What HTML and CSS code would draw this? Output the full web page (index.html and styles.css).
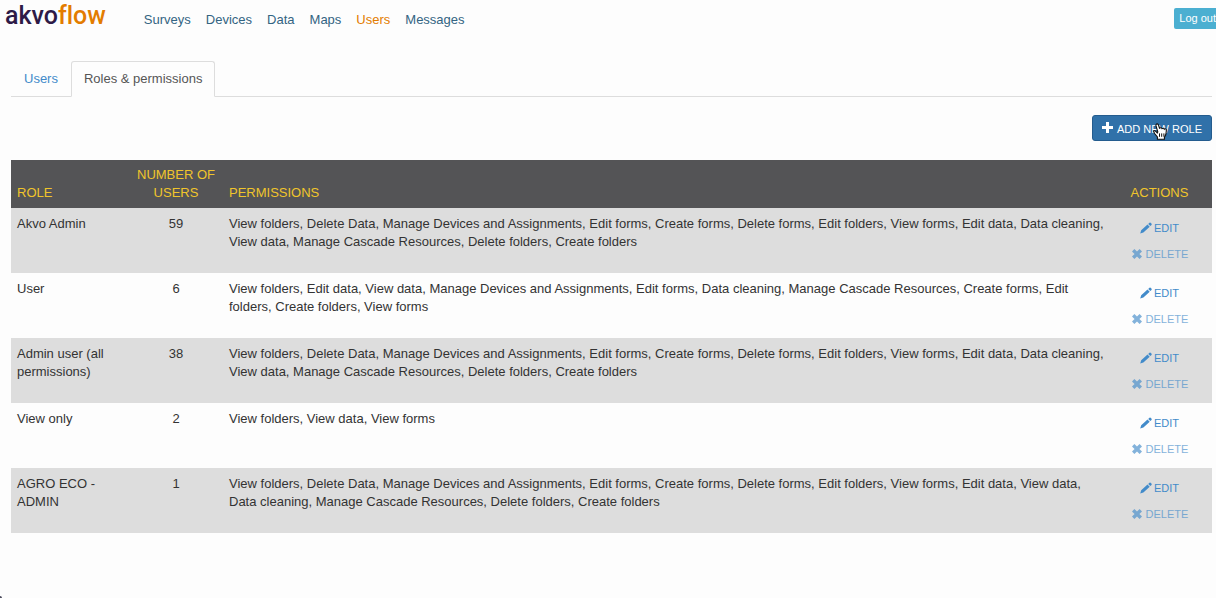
FILE: index.html
```html
<!DOCTYPE html>
<html lang="en">
<head>
<meta charset="utf-8">
<title>Akvo Flow - Roles &amp; permissions</title>
<link rel="stylesheet" href="styles.css">
</head>
<body>
<svg class="sprite" aria-hidden="true">
  <symbol id="pencil" viewBox="0 0 12 12"><path d="M0.2 11.6L1.2 8.3L7.5 2.5L9.7 4.8L3.4 10.6ZM8.2 1.9L9.5 .7Q10.1 .3 10.6 .8L11.6 1.8Q12 2.4 11.5 3L10.3 4.1Z" fill="currentColor"/></symbol>
  <symbol id="cross" viewBox="0 0 12 12"><path d="M1 3.4L3.4 1L6 3.6L8.6 1L11 3.4L8.4 6L11 8.6L8.6 11L6 8.4L3.4 11L1 8.6L3.6 6Z" fill="currentColor"/></symbol>
</svg>
<header class="header">
  <a class="logo" href="#">akvo<span class="logo-flow">flow</span></a>
  <nav class="nav">
    <a href="#">Surveys</a>
    <a href="#">Devices</a>
    <a href="#">Data</a>
    <a href="#">Maps</a>
    <a class="current" href="#">Users</a>
    <a href="#">Messages</a>
  </nav>
  <a class="logout" href="#">Log out</a>
</header>
<main class="main">
  <nav class="tabs">
    <a class="tab" href="#">Users</a>
    <a class="tab active" href="#">Roles &amp; permissions</a>
  </nav>
  <div class="toolbar">
    <button class="add" type="button"><svg class="plus" viewBox="0 0 11 11" aria-hidden="true"><path d="M4 0H7V4H11V7H7V11H4V7H0V4H4Z" fill="currentColor"/></svg>ADD NEW ROLE</button>
    <svg class="pointer" viewBox="0 0 14 17" aria-hidden="true"><path d="M4.2 10L2.6 8.2Q.8 6.8 .6 8.2Q.8 9.4 2 11L4.4 14V16.3H11.4V14.4Q13.3 12 13.3 8V6.5Q12.3 5.2 11.3 6.2Q10.5 4.6 9 5.6Q8.2 4.2 6.5 5.2L5.3 1.6Q4.2 .2 3.2 1.4Q2.6 2 3 2.8L4.8 9Z" fill="#fff" stroke="#111" stroke-width="1.1"/><path d="M6.5 10.4V13.8M8.7 10.4V13.8M10.9 10.4V13.8" stroke="#111" stroke-width="1" fill="none"/></svg>
  </div>
  <table class="roles">
    <colgroup><col class="col-role"><col class="col-users"><col><col class="col-actions"></colgroup>
    <thead>
      <tr><th>ROLE</th><th class="center">NUMBER OF USERS</th><th>PERMISSIONS</th><th class="center">ACTIONS</th></tr>
    </thead>
    <tbody>
      <tr>
        <td>Akvo Admin</td><td class="center">59</td>
        <td class="permissions">View folders, Delete Data, Manage Devices and Assignments, Edit forms, Create forms, Delete forms, Edit folders, View forms, Edit data, Data cleaning, View data, Manage Cascade Resources, Delete folders, Create folders</td>
        <td class="actions"><button class="action" type="button"><svg class="icon"><use href="#pencil"/></svg>EDIT</button><button class="action delete" type="button"><svg class="icon"><use href="#cross"/></svg>DELETE</button></td>
      </tr>
      <tr>
        <td>User</td><td class="center">6</td>
        <td class="permissions">View folders, Edit data, View data, Manage Devices and Assignments, Edit forms, Data cleaning, Manage Cascade Resources, Create forms, Edit folders, Create folders, View forms</td>
        <td class="actions"><button class="action" type="button"><svg class="icon"><use href="#pencil"/></svg>EDIT</button><button class="action delete" type="button"><svg class="icon"><use href="#cross"/></svg>DELETE</button></td>
      </tr>
      <tr>
        <td>Admin user (all permissions)</td><td class="center">38</td>
        <td class="permissions">View folders, Delete Data, Manage Devices and Assignments, Edit forms, Create forms, Delete forms, Edit folders, View forms, Edit data, Data cleaning, View data, Manage Cascade Resources, Delete folders, Create folders</td>
        <td class="actions"><button class="action" type="button"><svg class="icon"><use href="#pencil"/></svg>EDIT</button><button class="action delete" type="button"><svg class="icon"><use href="#cross"/></svg>DELETE</button></td>
      </tr>
      <tr>
        <td>View only</td><td class="center">2</td>
        <td class="permissions">View folders, View data, View forms</td>
        <td class="actions"><button class="action" type="button"><svg class="icon"><use href="#pencil"/></svg>EDIT</button><button class="action delete" type="button"><svg class="icon"><use href="#cross"/></svg>DELETE</button></td>
      </tr>
      <tr>
        <td>AGRO ECO - ADMIN</td><td class="center">1</td>
        <td class="permissions">View folders, Delete Data, Manage Devices and Assignments, Edit forms, Create forms, Delete forms, Edit folders, View forms, Edit data, View data, Data cleaning, Manage Cascade Resources, Delete folders, Create folders</td>
        <td class="actions"><button class="action" type="button"><svg class="icon"><use href="#pencil"/></svg>EDIT</button><button class="action delete" type="button"><svg class="icon"><use href="#cross"/></svg>DELETE</button></td>
      </tr>
    </tbody>
  </table>
</main>
<span class="corner" aria-hidden="true"></span>
</body>
</html>
```
FILE: styles.css
```css
* { box-sizing: border-box; }
body {
  margin: 0;
  background: #fdfdfd;
  color: #333;
  font: 13px/18px "Liberation Sans", Arial, sans-serif;
}
a { text-decoration: none; }
button { font-family: inherit; cursor: pointer; }
.sprite { position: absolute; width: 0; height: 0; }
.header {
  display: flex;
  align-items: flex-start;
  height: 61px;
}
.logo {
  margin: 2px 0 0 5px;
  color: #2e1b47;
  font: 500 25px/28px Roboto, sans-serif;
  font-variant-ligatures: none;
}
.logo-flow { color: #e37c00; }
.nav {
  display: flex;
  flex: 1;
  gap: 15px;
  margin: 11px 0 0 38px;
}
.nav a { color: #336482; }
.nav .current { color: #e37c00; }
.logout {
  margin-top: 8px;
  padding: 0 0 0 5px;
  border-radius: 2px 0 0 2px;
  background: #4bafd1;
  color: #fff;
  font-size: 11px;
  line-height: 21px;
}
.main { padding: 0 4px 0 11px; }
.tabs {
  display: flex;
  border-bottom: 1px solid #ddd;
}
.tab {
  margin-bottom: -1px;
  padding: 8px 12px;
  border: 1px solid transparent;
  border-radius: 3px 3px 0 0;
  color: #428bca;
  line-height: 18px;
}
.tab.active {
  border-color: #ddd #ddd #fdfdfd;
  background: #fdfdfd;
  color: #555;
}
.toolbar {
  position: relative;
  display: flex;
  justify-content: flex-end;
  padding: 18px 0 19px;
}
.add {
  display: flex;
  align-items: center;
  gap: 4px;
  height: 26px;
  padding: 1px 9px 0;
  border: 1px solid #245c8e;
  border-radius: 3px;
  background: #3071a9;
  color: #fff;
  font-size: 11px;
}
.plus { width: 11px; height: 11px; margin-top: -2px; }
.pointer {
  position: absolute;
  top: 26px;
  right: 45px;
  width: 14px;
  height: 17px;
}
.roles {
  width: 100%;
  table-layout: fixed;
  border-collapse: collapse;
}
.col-role { width: 118px; }
.col-users { width: 94px; }
.col-actions { width: 105px; }
th {
  padding: 6px;
  background: #545456;
  color: #f0c52b;
  font-weight: normal;
  text-align: left;
  vertical-align: bottom;
}
td { padding: 7px 6px; vertical-align: top; }
.center { text-align: center; }
tbody tr:nth-child(odd) { background: #ddd; }
.roles .permissions { padding-right: 0; }
.roles .actions { padding: 7px 0 6px; }
.action {
  display: flex;
  align-items: center;
  gap: 2px;
  height: 26px;
  margin: 0 auto;
  padding: 0;
  border: 0;
  background: none;
  color: #428bca;
  font-size: 11px;
}
.delete { gap: 3px; opacity: .65; }
.icon { width: 12px; height: 12px; }
.corner {
  position: fixed;
  left: 0;
  bottom: 0;
  width: 2px;
  height: 2px;
  background: #4a4a5c;
  border-radius: 0 2px 0 0;
}
```
